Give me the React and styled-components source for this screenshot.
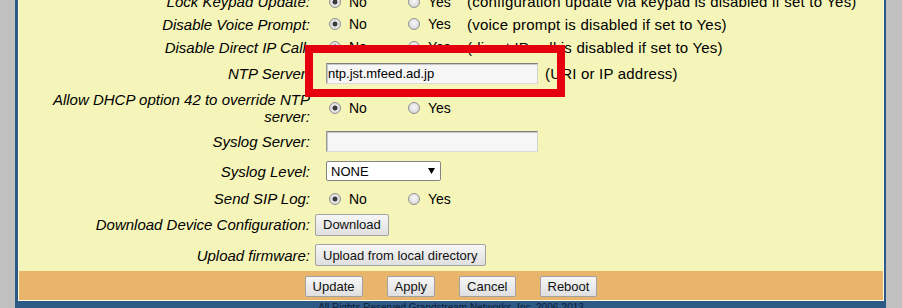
import React from "react";
import styled, { createGlobalStyle } from "styled-components";

const GlobalStyle = createGlobalStyle`
  html, body {
    margin: 0;
    padding: 0;
    background: #c0c0c0;
    overflow: hidden;
  }
  body {
    font-family: "Liberation Sans", Arial, sans-serif;
    color: #000;
  }
`;

const Page = styled.div`
  position: relative;
  height: 308px;
  overflow: hidden;
`;

const Frame = styled.div`
  margin: -10px 0 0 15px;
  width: 871px;
  box-sizing: border-box;
  background: #2c5986;
  padding: 0 2px 0 3px;
`;

const Panel = styled.div`
  border: 1px solid #fafae4;
  border-top: none;
  background: #f5f5b9;
`;

const Form = styled.div`
  display: flex;
  flex-direction: column;
`;

const Row = styled.div`
  display: grid;
  grid-template-columns: 291px 1fr;
  column-gap: 5px;
  align-items: center;
  height: ${(p) => p.$h}px;
`;

const Label = styled.div`
  text-align: right;
  font-style: italic;
  font-size: 15px;
  line-height: 17px;
  white-space: nowrap;
`;

const Value = styled.div`
  display: flex;
  align-items: center;
  font-size: 14px;
  white-space: nowrap;
`;

const Option = styled.label`
  display: inline-flex;
  align-items: center;
  gap: 8px;
  width: ${(p) => p.$w}px;
  margin-left: ${(p) => p.$ml || 0}px;
  font-size: 14px;
  line-height: 16px;
`;

const Radio = styled.input.attrs({ type: "radio" })`
  appearance: none;
  -webkit-appearance: none;
  margin: 0;
  width: 12px;
  height: 12px;
  box-sizing: border-box;
  border-radius: 50%;
  border: 1px solid #929292;
  background: radial-gradient(circle at 50% 40%, #f7f7f7 0%, #e2e2e2 55%, #c8c8c8 100%);
  &:checked {
    background: radial-gradient(circle at 50% 50%, #3c3c3c 0, #3c3c3c 2.2px, #e8e8e8 2.8px, #dadada 70%, #c4c4c4 100%);
  }
`;

const Desc = styled.span`
  font-size: 15px;
  letter-spacing: 0.2px;
  margin-left: ${(p) => p.$ml || 2}px;
`;

const TextInput = styled.input`
  margin: 0 0 0 11px;
  width: 212px;
  height: 21px;
  box-sizing: border-box;
  border: 1px solid;
  border-color: #7e7e7e #d2d2d2 #dadada #9a9a9a;
  box-shadow: inset 1px 1px 0 #c9c9c9;
  background: #f6f6f6;
  padding: 0 1px;
  font: 13px "Liberation Sans", Arial, sans-serif;
  color: #000;
`;

const SelectWrap = styled.span`
  position: relative;
  display: inline-block;
  margin-left: 11px;
`;

const Select = styled.select`
  appearance: none;
  -webkit-appearance: none;
  margin: 0;
  width: 115px;
  height: 20px;
  box-sizing: border-box;
  border: 1px solid #838383;
  border-radius: 2px;
  background: #fff;
  padding: 0 4px;
  font: 13px "Liberation Sans", Arial, sans-serif;
  color: #000;
`;

const Arrow = styled.svg`
  position: absolute;
  right: 6px;
  top: 7px;
  pointer-events: none;
`;

const Button = styled.button`
  margin: 0;
  height: ${(p) => p.$h || 22}px;
  padding: 0 ${(p) => p.$px || 7}px;
  box-sizing: border-box;
  border: 1px solid #a2a2a2;
  border-radius: 2px;
  background: linear-gradient(#f7f7f7, #dfdfdf);
  font: 13px "Liberation Sans", Arial, sans-serif;
  color: #111;
`;

const ActionBar = styled.div`
  height: 29px;
  background: #e9b46b;
  display: flex;
  justify-content: center;
  align-items: center;
  gap: 24px;
  padding-top: 1px;
  box-sizing: border-box;
`;

const Footer = styled.div`
  height: 20px;
  padding-top: 1px;
  text-align: center;
  font: 10px/12px "Liberation Sans", Arial, sans-serif;
  color: #0c1b33;
`;

const Highlight = styled.div`
  position: absolute;
  left: 305px;
  top: 45px;
  width: 260px;
  height: 52px;
  box-sizing: border-box;
  border: 8px solid #e6000f;
  pointer-events: none;
`;

function YesNo({ name, desc }) {
  return (
    <>
      <Option $w={79} $ml={14}>
        <Radio name={name} defaultChecked />
        No
      </Option>
      <Option $w={57}>
        <Radio name={name} />
        Yes
      </Option>
      {desc && <Desc>{desc}</Desc>}
    </>
  );
}

export default function App() {
  return (
    <Page>
      <GlobalStyle />
      <Frame>
        <Panel>
          <Form>
            <Row $h={23}>
              <Label>Lock Keypad Update:</Label>
              <Value>
                <YesNo name="lock" desc="(configuration update via keypad is disabled if set to Yes)" />
              </Value>
            </Row>
            <Row $h={22}>
              <Label>Disable Voice Prompt:</Label>
              <Value>
                <YesNo name="voice" desc="(voice prompt is disabled if set to Yes)" />
              </Value>
            </Row>
            <Row $h={24}>
              <Label>Disable Direct IP Call:</Label>
              <Value>
                <YesNo name="dip" desc="(direct IP call is disabled if set to Yes)" />
              </Value>
            </Row>
            <Row $h={29}>
              <Label>NTP Server:</Label>
              <Value>
                <TextInput defaultValue="ntp.jst.mfeed.ad.jp" />
                <Desc $ml={7}>(URI or IP address)</Desc>
              </Value>
            </Row>
            <Row $h={40}>
              <Label>
                Allow DHCP option 42 to override NTP
                <br />
                server:
              </Label>
              <Value>
                <YesNo name="dhcp" />
              </Value>
            </Row>
            <Row $h={27}>
              <Label>Syslog Server:</Label>
              <Value>
                <TextInput defaultValue="" />
              </Value>
            </Row>
            <Row $h={32}>
              <Label>Syslog Level:</Label>
              <Value>
                <SelectWrap>
                  <Select defaultValue="NONE">
                    <option>NONE</option>
                    <option>DEBUG</option>
                    <option>INFO</option>
                    <option>WARNING</option>
                    <option>ERROR</option>
                  </Select>
                  <Arrow width="7" height="6" viewBox="0 0 7 6">
                    <path d="M0 0 H7 L3.5 6 Z" fill="#000" />
                  </Arrow>
                </SelectWrap>
              </Value>
            </Row>
            <Row $h={23}>
              <Label>Send SIP Log:</Label>
              <Value>
                <YesNo name="siplog" />
              </Value>
            </Row>
            <Row $h={29}>
              <Label>Download Device Configuration:</Label>
              <Value>
                <Button>Download</Button>
              </Value>
            </Row>
            <Row $h={32}>
              <Label>Upload firmware:</Label>
              <Value>
                <Button $px={7}>Upload from local directory</Button>
              </Value>
            </Row>
          </Form>
          <ActionBar>
            <Button $h={21}>Update</Button>
            <Button $h={21}>Apply</Button>
            <Button $h={21}>Cancel</Button>
            <Button $h={21}>Reboot</Button>
          </ActionBar>
        </Panel>
        <Footer>All Rights Reserved Grandstream Networks, Inc. 2006-2013</Footer>
      </Frame>
      <Highlight />
    </Page>
  );
}
